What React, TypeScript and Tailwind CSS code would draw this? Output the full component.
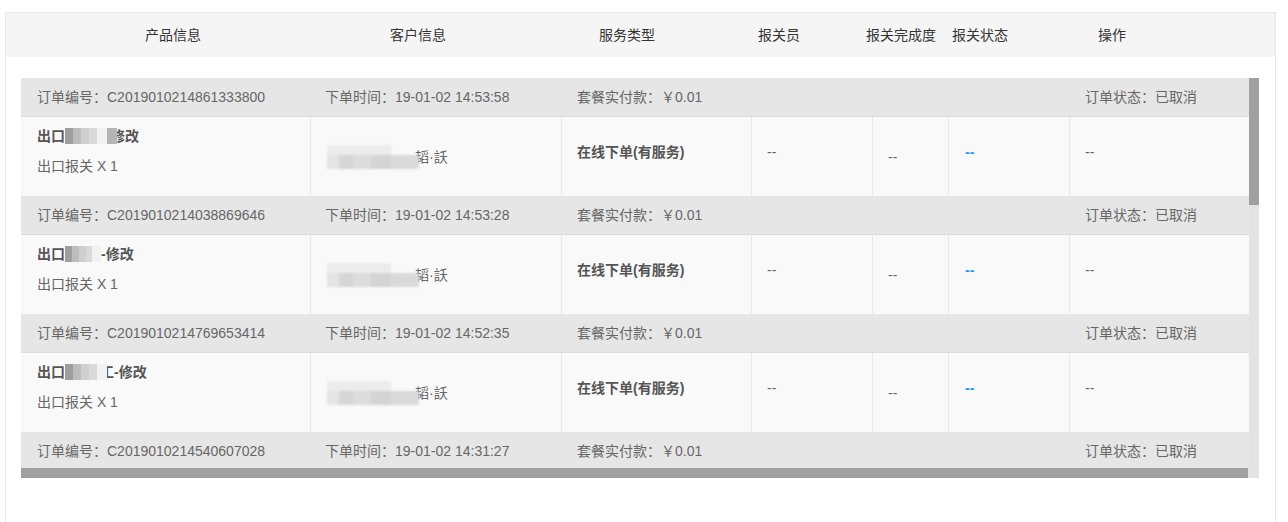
import React from 'react';

type Order = {
  no: string;
  time: string;
  tail: string;
  blurW: string;
  overlap: string;
};

const orders: Order[] = [
  { no: 'C2019010214861333800', time: '19-01-02 14:53:58', tail: '修改', blurW: 'w-[52px]', overlap: '-ml-[6px]' },
  { no: 'C2019010214038869646', time: '19-01-02 14:53:28', tail: '-修改', blurW: 'w-[36px]', overlap: 'ml-0' },
  { no: 'C2019010214769653414', time: '19-01-02 14:52:35', tail: '工-修改', blurW: 'w-[42px]', overlap: '-ml-[7px]' },
  { no: 'C2019010214540607028', time: '19-01-02 14:31:27', tail: '', blurW: '', overlap: '' },
];

const headers = [
  { label: '产品信息', w: 'w-[245px]' },
  { label: '客户信息', w: 'w-[209px]' },
  { label: '服务类型', w: 'w-[159px]' },
  { label: '报关员', w: 'w-[108px]' },
  { label: '报关完成度', w: 'w-[86px]' },
  { label: '报关状态', w: 'w-[146px]' },
  { label: '操作', w: 'w-[60px]' },
];

// pixelated redaction block seen in the screenshot
function Mosaic({ className }: { className: string }) {
  return (
    <span className={`relative z-10 inline-flex h-[16px] overflow-hidden blur-[0.6px] ${className}`}>
      <span className="w-[8px] bg-[#9e9e9e]" />
      <span className="w-[8px] bg-[#bdbdbd]" />
      <span className="w-[8px] bg-[#cfcfcf]" />
      <span className="w-[8px] bg-[#d9d9d9]" />
      <span className="w-[10px] bg-[#f2f2f2]" />
      <span className="flex-1 bg-[#b5b5b5]" />
    </span>
  );
}

function CustomerBlur() {
  return (
    <span className="relative z-10 inline-flex flex-col w-[92px] blur-[1px]">
      <span className="h-[10px] w-[64px] bg-[#ececec]" />
      <span className="flex h-[14px]">
        <span className="w-[12px] bg-[#e4e4e4]" />
        <span className="w-[14px] bg-[#d6d6d6]" />
        <span className="w-[18px] bg-[#dcdcdc]" />
        <span className="w-[20px] bg-[#d4d4d4]" />
        <span className="flex-1 bg-[#dadada]" />
      </span>
    </span>
  );
}

function OrderGroup({ order }: { order: Order }) {
  return (
    <div>
      {/* order summary row */}
      <div className="flex h-[39px] items-center bg-[#e6e6e6] border-b border-[#dcdcdc] text-[#666]">
        <div className="w-[289px] pl-[16px]">订单编号：{order.no}</div>
        <div className="w-[251px] pl-[15px]">下单时间：{order.time}</div>
        <div className="w-[508px] pl-[16px]">套餐实付款：￥0.01</div>
        <div className="w-[180px] pl-[16px]">订单状态：已取消</div>
      </div>

      {/* detail row */}
      {order.tail && (
        <div className="flex h-[79px] bg-[#f9f9f9] text-[#666]">
          <div className="w-[289px] pl-[16px] pt-[8px]">
            <div className="flex items-center leading-[22px] font-bold text-[#555]">
              <span>出口</span>
              <Mosaic className={order.blurW} />
              <span className={order.overlap}>{order.tail}</span>
            </div>
            <div className="mt-[8px] leading-[22px]">出口报关 X 1</div>
          </div>
          <div className="w-[251px] border-l border-[#e8e8e8] pl-[16px] flex items-center">
            <CustomerBlur />
            <span className="-ml-[4px] mt-[2px]">韬·訞</span>
          </div>
          <div className="w-[190px] border-l border-[#e8e8e8] pl-[15px] pt-[24px] leading-[22px] font-bold text-[#555]">
            在线下单(有服务)
          </div>
          <div className="w-[121px] border-l border-[#e8e8e8] pl-[15px] pt-[24px] leading-[22px]">--</div>
          <div className="w-[76px] border-l border-[#e8e8e8] pl-[15px] flex items-center leading-[22px]">--</div>
          <div className="w-[121px] border-l border-[#e8e8e8] pl-[16px] pt-[24px] leading-[22px] font-bold text-[#2196f3]">--</div>
          <div className="w-[180px] border-l border-[#e8e8e8] pl-[15px] pt-[24px] leading-[22px]">--</div>
        </div>
      )}
    </div>
  );
}

export default function App() {
  return (
    <div className="min-h-screen bg-white pt-[12px] pl-[5px] pr-[12px] text-[14px] font-['Liberation_Sans','Noto_Sans_CJK_SC',sans-serif]">
      <div className="h-[520px] border border-[#e8e8e8]">
        {/* Table header */}
        <div className="flex h-[44px] items-center bg-[#f5f5f5] pl-[139px] text-[#333]">
          {headers.map((h) => (
            <div key={h.label} className={`${h.w} shrink-0`}>
              {h.label}
            </div>
          ))}
        </div>

        {/* Scrollable list */}
        <div className="pl-[15px] pt-[21px]">
          <div className="flex h-[400px] w-[1238px] flex-col">
            <div className="flex h-[390px]">
              <div className="w-[1228px] overflow-hidden">
                {orders.map((o) => (
                  <OrderGroup key={o.no} order={o} />
                ))}
              </div>
              <div className="w-[10px] bg-[#e3e3e3]">
                <div className="h-[127px] bg-[#a0a0a0]" />
              </div>
            </div>
            <div className="flex h-[10px]">
              <div className="w-[1227px] bg-[#a0a0a0]" />
              <div className="flex-1 bg-[#e3e3e3]" />
            </div>
          </div>
        </div>
      </div>
    </div>
  );
}
